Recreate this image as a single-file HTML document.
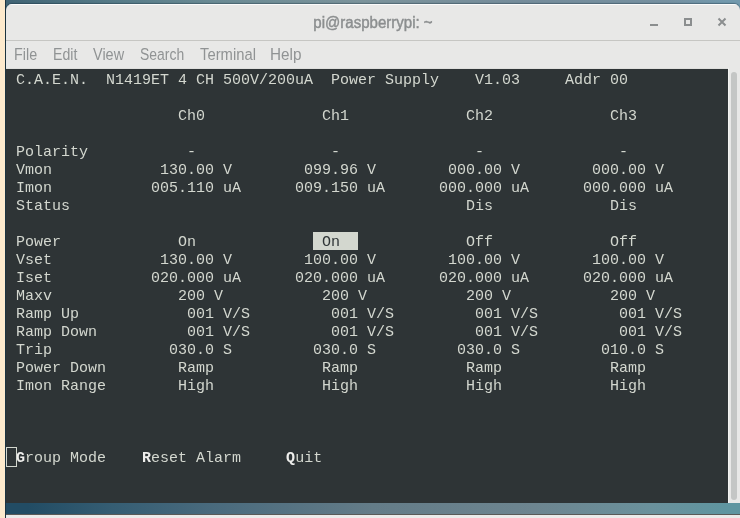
<!DOCTYPE html>
<html><head><meta charset="utf-8">
<style>
html,body{margin:0;padding:0;width:740px;height:518px;overflow:hidden;}
body{position:relative;background:#4d7b92;font-family:"Liberation Sans",sans-serif;}
#bg{position:absolute;left:0;top:0;width:740px;height:518px;background:linear-gradient(90deg,#416475 1%,#567b88 15.5%,#6a8a94 29%,#7b939b 49%,#758c9b 70%,#7590a0 90%,#7299ad 98%);}
#beige{position:absolute;left:0;top:0;width:5px;height:518px;background:#fdeacd;}
#lborder{position:absolute;left:5px;top:0;width:1px;height:518px;background:#1c3442;}
#botband{position:absolute;left:6px;top:503px;width:734px;height:12px;background:linear-gradient(90deg,#224c64 3%,#355d73 14.5%,#496a7d 28%,#647c88 50%,#6d8590 72%,#6a919c 88%,#5f95a0 98%);}
#botline{position:absolute;left:6px;top:514px;width:734px;height:1px;background:#5a5a58;}
#botgrey{position:absolute;left:6px;top:515px;width:734px;height:3px;background:#ebebea;border-top:0;}
#win{will-change:transform;position:absolute;left:6px;top:4px;box-shadow:0 -1px 1px rgba(10,30,45,0.35);width:734px;height:499px;background:#e8e8e7;border-radius:6px 6px 0 0;overflow:hidden;}
#win:before{content:"";position:absolute;left:0;top:0;right:0;height:1px;background:#fbfbfb;border-radius:6px 6px 0 0;}
#title{position:absolute;left:0;top:0;width:734px;height:36px;text-align:center;line-height:37px;font-size:16px;font-weight:normal;-webkit-text-stroke:0.45px #8b8e8f;transform:scaleX(0.94);transform-origin:366.5px 0;color:#8b8e8f;}
#sep{position:absolute;left:0;top:36px;width:734px;height:1px;background:#c6c6c3;}
#menu{position:absolute;left:0;top:37px;width:734px;height:27px;font-size:15.5px;color:#909394;}
#menu span{position:absolute;top:0px;line-height:28px;transform-origin:0 18px;white-space:pre;}
#term{position:absolute;left:0;top:65px;width:722px;height:434px;background:#2e3436;}
#sb{position:absolute;left:722px;top:64px;width:12px;height:435px;background:#e8e8e7;border-left:1px solid #f3f3f2;box-sizing:border-box;}
#slider{position:absolute;left:2px;top:4px;width:6px;height:428px;background:#c4c6c5;border-radius:3px;}
.row{position:absolute;left:1px;height:18px;line-height:18px;white-space:pre;font-family:"Liberation Mono",monospace;font-size:15px;letter-spacing:0.0000px;color:#d3d7cf;}
.row b{color:#eeeeec;font-weight:bold;}
.hl{color:#2e3436;}
.hlbox{position:absolute;left:307px;width:45px;height:18px;background:#d3d7cf;}
#cursor{position:absolute;left:0px;top:378px;width:11px;height:20px;border:1px solid #d3d7cf;box-sizing:border-box;}
.wc{position:absolute;background:#8b8e8f;}
</style></head><body>
<div id="bg"></div>
<div id="beige"></div>
<div id="lborder"></div>
<div id="botband"></div>
<div id="botline"></div>
<div id="botgrey"></div>
<div id="win">
  <div id="title">pi@raspberrypi: ~</div>
  <div class="wc" style="left:644px;top:20px;width:8px;height:2px;"></div>
  <div style="position:absolute;left:678px;top:14px;width:8px;height:8px;border:2px solid #8b8e8f;box-sizing:border-box;"></div>
  <svg style="position:absolute;left:710px;top:12px" width="12" height="12" viewBox="0 0 12 12"><path d="M2.5 2.5 L9.5 9.5 M9.5 2.5 L2.5 9.5" stroke="#8b8e8f" stroke-width="2"/></svg>
  <div id="sep"></div>
  <div id="mline" style="position:absolute;left:0;top:64px;width:734px;height:1px;background:#dfdfdd;"></div>
  <div id="menu">
    <span style="left:7.54px;transform:scale(0.926,1.04)">File</span>
    <span style="left:46.56px;transform:scale(0.911,1.04)">Edit</span>
    <span style="left:86.77px;transform:scale(0.933,1.04)">View</span>
    <span style="left:134.03px;transform:scale(0.899,1.04)">Search</span>
    <span style="left:193.86px;transform:scale(0.955,1.04)">Terminal</span>
    <span style="left:264.37px;transform:scale(0.987,1.04)">Help</span>
  </div>
  <div id="term">
<div class="row" style="top:3px"> C.A.E.N.  N1419ET 4 CH 500V/200uA  Power Supply    V1.03     Addr 00</div>
<div class="row" style="top:39px">                   Ch0             Ch1             Ch2             Ch3</div>
<div class="row" style="top:75px"> Polarity           -               -               -               -</div>
<div class="row" style="top:93px"> Vmon            130.00 V        099.96 V        000.00 V        000.00 V</div>
<div class="row" style="top:111px"> Imon           005.110 uA      009.150 uA      000.000 uA      000.000 uA</div>
<div class="row" style="top:129px"> Status                                            Dis             Dis</div>
<div class="hlbox" style="top:163px"></div>
<div class="row" style="top:165px"> Power             On             <span class="hl"> On  </span>            Off             Off</div>
<div class="row" style="top:183px"> Vset            130.00 V        100.00 V        100.00 V        100.00 V</div>
<div class="row" style="top:201px"> Iset           020.000 uA      020.000 uA      020.000 uA      020.000 uA</div>
<div class="row" style="top:219px"> Maxv              200 V           200 V           200 V           200 V</div>
<div class="row" style="top:237px"> Ramp Up            001 V/S         001 V/S         001 V/S         001 V/S</div>
<div class="row" style="top:255px"> Ramp Down          001 V/S         001 V/S         001 V/S         001 V/S</div>
<div class="row" style="top:273px"> Trip             030.0 S         030.0 S         030.0 S         010.0 S</div>
<div class="row" style="top:291px"> Power Down        Ramp            Ramp            Ramp            Ramp</div>
<div class="row" style="top:309px"> Imon Range        High            High            High            High</div>
<div class="row" style="top:381px"> <b>G</b>roup Mode    <b>R</b>eset Alarm     <b>Q</b>uit</div>
    <div id="cursor"></div>
  </div>
  <div id="sb"><div id="slider"></div></div>
</div>
</body></html>
